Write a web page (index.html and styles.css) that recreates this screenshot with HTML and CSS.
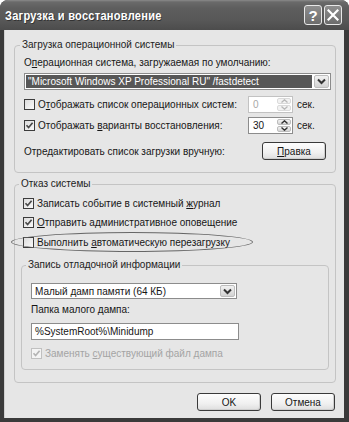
FILE: index.html
```html
<!DOCTYPE html>
<html lang="ru">
<head>
<meta charset="utf-8">
<title>Загрузка и восстановление</title>
<link rel="stylesheet" href="styles.css">
</head>
<body>
<div class="window">
  <div class="titlebar">
    <span class="title">Загрузка и восстановление</span>
    <div class="tb-buttons">
      <span class="tb-btn tb-help">?</span>
      <span class="tb-btn tb-close"><svg width="12" height="12" viewBox="0 0 12 12"><path d="M1.5 1.5 L10.5 10.5 M10.5 1.5 L1.5 10.5" stroke="#fff" stroke-width="2.2" stroke-linecap="square"/></svg></span>
    </div>
  </div>
  <div class="client">
    <fieldset class="group g1">
      <legend>Загрузка операционной системы</legend>
      <div class="text-row t-os">О<u>п</u>ерационная система, загружаемая по умолчанию:</div>
      <div class="combo combo-os">
        <span class="combo-text selected">"Microsoft Windows XP Professional RU" /fastdetect</span>
        <span class="drop"><svg width="9" height="7" viewBox="0 0 9 7"><path d="M1 1.5 L4.5 5 L8 1.5" fill="none" stroke="#333" stroke-width="2"/></svg></span>
      </div>
      <div class="row r-list">
        <span class="check"><span class="box"></span><span>О<u>т</u>ображать список операционных систем:</span></span>
        <span class="spin disabled"><span class="spin-val">0</span><span class="spin-btns"><span class="sb"><svg width="7" height="4" viewBox="0 0 7 4"><path d="M0.5 3.5 L3.5 0.8 L6.5 3.5" fill="none" stroke="#b8b8b8" stroke-width="1.3"/></svg></span><span class="sb"><svg width="7" height="4" viewBox="0 0 7 4"><path d="M0.5 0.5 L3.5 3.2 L6.5 0.5" fill="none" stroke="#b8b8b8" stroke-width="1.3"/></svg></span></span></span>
        <span class="unit">сек.</span>
      </div>
      <div class="row r-rec">
        <span class="check"><span class="box checked"><svg width="9" height="9" viewBox="0 0 9 9"><path d="M1.5 4.2 L3.6 6.5 L7.6 1.8" fill="none" stroke="#4a4a4a" stroke-width="1.7"/></svg></span><span>Отображать <u>в</u>арианты восстановления:</span></span>
        <span class="spin"><span class="spin-val">30</span><span class="spin-btns"><span class="sb"><svg width="7" height="4" viewBox="0 0 7 4"><path d="M0.5 3.5 L3.5 0.8 L6.5 3.5" fill="none" stroke="#333" stroke-width="1.4"/></svg></span><span class="sb"><svg width="7" height="4" viewBox="0 0 7 4"><path d="M0.5 0.5 L3.5 3.2 L6.5 0.5" fill="none" stroke="#333" stroke-width="1.4"/></svg></span></span></span>
        <span class="unit">сек.</span>
      </div>
      <div class="row r-edit">
        <span class="edit-text">Отредактировать список загрузки вручную:</span>
        <span class="btn btn-edit"><u>П</u>равка</span>
      </div>
    </fieldset>

    <fieldset class="group g2">
      <legend>Отказ системы</legend>
      <div class="row crow c1">
        <span class="check"><span class="box checked"><svg width="9" height="9" viewBox="0 0 9 9"><path d="M1.5 4.2 L3.6 6.5 L7.6 1.8" fill="none" stroke="#4a4a4a" stroke-width="1.7"/></svg></span><span>Записать событие в системный <u>ж</u>урнал</span></span>
      </div>
      <div class="row crow c2">
        <span class="check"><span class="box checked"><svg width="9" height="9" viewBox="0 0 9 9"><path d="M1.5 4.2 L3.6 6.5 L7.6 1.8" fill="none" stroke="#4a4a4a" stroke-width="1.7"/></svg></span><span><u>О</u>тправить административное оповещение</span></span>
      </div>
      <div class="row crow c3">
        <span class="check"><span class="box"></span><span>Выполнить <u>а</u>втоматическую перезагрузку</span></span>
        <span class="ellipse"></span>
      </div>

      <fieldset class="group g3">
        <legend>Запись отладочной информации</legend>
        <div class="combo combo-dump">
          <span class="combo-text">Малый дамп памяти (64 КБ)</span>
          <span class="drop"><svg width="9" height="7" viewBox="0 0 9 7"><path d="M1 1.5 L4.5 5 L8 1.5" fill="none" stroke="#333" stroke-width="2"/></svg></span>
        </div>
        <div class="text-row t-folder">Папка малого дампа:</div>
        <div class="input">%SystemRoot%\Minidump</div>
        <div class="row crow c4 dis">
          <span class="check"><span class="box checked"><svg width="9" height="9" viewBox="0 0 9 9"><path d="M1.5 4.2 L3.6 6.5 L7.6 1.8" fill="none" stroke="#b4b4b4" stroke-width="1.7"/></svg></span><span>Заменять <u>с</u>уществующий файл дампа</span></span>
        </div>
      </fieldset>
    </fieldset>

    <div class="actions">
      <span class="btn">OK</span>
      <span class="btn">Отмена</span>
    </div>
  </div>
</div>
</body>
</html>
```

FILE: styles.css
```css
* { box-sizing: border-box; }
html, body { margin: 0; padding: 0; background: #fff; }
body {
  width: 349px; height: 422px; overflow: hidden;
  font-family: "Liberation Sans", Arial, sans-serif;
  font-size: 10px; color: #161616;
}
u { text-decoration: underline; text-underline-offset: 1px; }

.window {
  width: 349px; height: 422px;
  background: #3a3a3a;
  border-radius: 8px 8px 0 0;
  display: flex; flex-direction: column;
  overflow: hidden;
}
.titlebar {
  height: 30px; flex: none;
  display: flex; align-items: center; justify-content: space-between;
  padding: 0 7px 0 5px;
  background: linear-gradient(#8a8a8a 0, #6a6a6a 2px, #5e5e5e 8px, #585858 20px, #4c4c4c 30px);
}
.title {
  color: #fff; font-weight: bold; font-size: 13.5px;
  font-family: "Liberation Sans", Arial, sans-serif;
  letter-spacing: 0.3px;
  transform: scaleX(0.82); transform-origin: left center;
  text-shadow: 1px 1px 0 #333;
  white-space: nowrap;
}
.tb-buttons { display: flex; gap: 2px; }
.tb-btn {
  width: 18px; height: 20px;
  border: 1px solid #e8e8e8; border-radius: 3px;
  background: linear-gradient(#8e8e8e, #6c6c6c);
  display: flex; align-items: center; justify-content: center;
  color: #fff; font-weight: bold; font-size: 15px; line-height: 1;
}

.client {
  flex: 1;
  margin: 0 5px 4px 4px;
  background: #e6e6e6;
  padding: 9px 8px 0 9px;
  border-left: 1px solid #cfcfcf;
}

.group {
  margin: 0; min-width: 0;
  border: 1px solid #c4c4c4; border-radius: 4px;
}
.group > legend {
  padding: 0 2px; margin-left: -4px;
  line-height: 12px; height: 12px; color: #222;
}
.g1 { padding: 0 4px 12px 9px; }
.g2 { margin-top: 5px; padding: 0 6px 12px 8px; }
.g3 { margin: 9px 0 0 -2px; padding: 0 8px 9px 9px; }
.g3 > legend { margin-left: -5px; }

.text-row { height: 12px; line-height: 12px; white-space: nowrap; }
.t-os { margin-top: 6px; }

.combo {
  display: flex; align-items: stretch;
  border: 1px solid #8c8c8c; background: #fff;
  padding: 1px;
}
.combo-os { margin-top: 4px; height: 17px; }
.combo-text {
  flex: 1; display: flex; align-items: center;
  padding-left: 2px; white-space: nowrap; overflow: hidden;
}
.combo-text.selected { background: #575757; color: #fff; margin-right: 2px; }
.drop {
  width: 15px; flex: none;
  border: 1px solid #bdbdbd; border-radius: 2px;
  background: linear-gradient(#f2f2f2, #d2d2d2);
  display: flex; align-items: center; justify-content: center;
}

.row { display: flex; align-items: center; white-space: nowrap; }
.r-list { margin-top: 6px; height: 17px; }
.r-rec { margin-top: 4px; height: 17px; }
.check { display: flex; align-items: center; gap: 3px; }
.r-list .check, .r-rec .check { width: 224px; }
.box {
  width: 11px; height: 11px; flex: none;
  border: 1px solid #3c3c3c;
  background: linear-gradient(135deg, #dcdcdc, #fafafa);
  display: flex; align-items: center; justify-content: center;
}

.spin {
  width: 45px; height: 17px; flex: none;
  border: 1px solid #8c8c8c; background: #fff;
  display: flex; align-items: stretch; padding: 1px;
}
.spin-val { flex: 1; display: flex; align-items: center; padding-left: 3px; }
.spin-btns { width: 14px; display: flex; flex-direction: column; gap: 1px; }
.sb {
  flex: 1; border: 1px solid #bcbcbc; border-radius: 2px;
  background: linear-gradient(#f4f4f4, #d4d4d4);
  display: flex; align-items: center; justify-content: center;
}
.spin.disabled { border-color: #c2c2c2; color: #a8a8a8; }
.spin.disabled .sb { border-color: #dadada; background: #f2f2f2; }
.unit { margin-left: 4px; }

.r-edit { margin-top: 8px; height: 18px; justify-content: space-between; padding-right: 5px; }

.btn {
  width: 64px; height: 18px;
  border: 1px solid #3a3a3a; border-radius: 3px;
  background: linear-gradient(#fdfdfd, #f0f0f0 60%, #dedede);
  display: inline-flex; align-items: center; justify-content: center;
  box-shadow: inset -1px -1px 0 #cfcfcf;
}

.crow { height: 16px; }
.c1 { margin-top: 5px; }
.c2 { margin-top: 3px; }
.c3 { margin-top: 4px; position: relative; }
.ellipse {
  position: absolute; left: -12px; top: -2px;
  width: 242px; height: 20px;
  border: 1.5px solid #666; border-radius: 50%;
}

.combo-dump { margin-top: 12px; height: 16px; width: 206px; }
.t-folder { margin-top: 5px; }
.input {
  margin-top: 7px; height: 17px; width: 208px;
  border: 1px solid #8c8c8c; background: #fff;
  padding-left: 3px; display: flex; align-items: center;
}
.c4 { margin-top: 6px; height: 14px; }
.dis { color: #a4a4a4; }
.dis .box { border-color: #c0c0c0; background: #f4f4f4; }

.actions {
  display: flex; justify-content: flex-end; gap: 10px;
  margin-top: 10px; padding-right: 1px;
}
```
